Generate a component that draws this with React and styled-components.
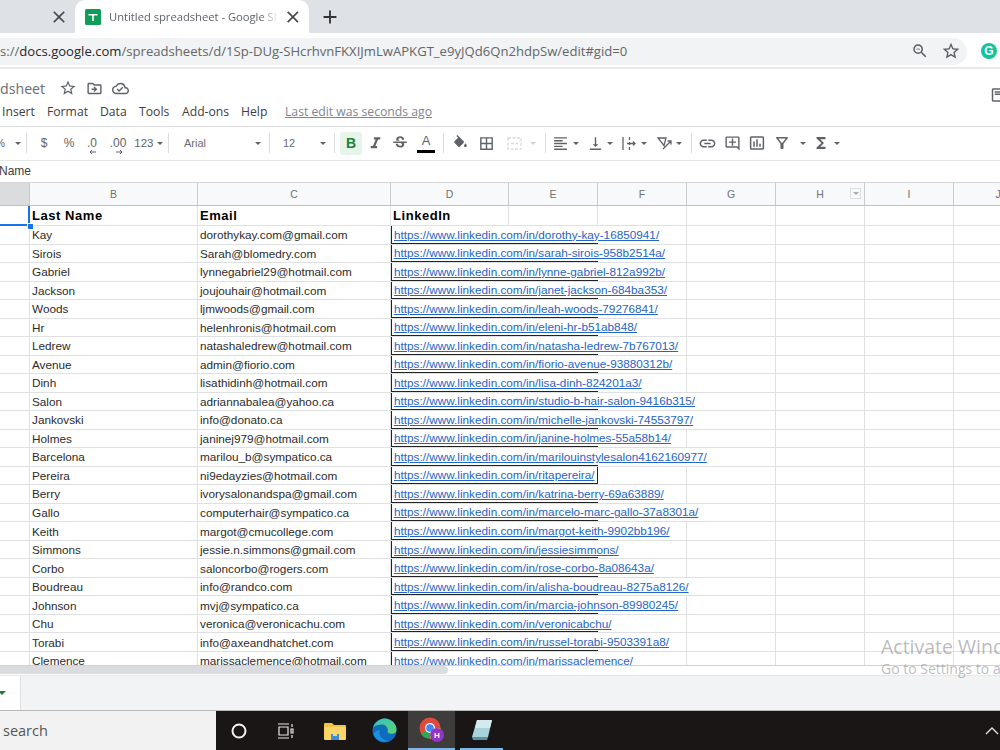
import React from 'react';
import styled, { createGlobalStyle } from 'styled-components';
import {
  MdClose, MdAdd, MdZoomOut, MdStarBorder, MdOutlineDriveFileMove, MdOutlineCloudDone,
  MdFormatItalic, MdStrikethroughS, MdBorderAll,
  MdFormatAlignLeft, MdVerticalAlignBottom, MdLink, MdOutlineAddComment, MdInsertChartOutlined,
  MdOutlineFilterAlt, MdFunctions, MdOutlineFeaturedPlayList,
} from 'react-icons/md';

const GlobalStyle = createGlobalStyle`
  html, body {
    margin: 0;
    padding: 0;
    overflow: hidden;
    background: #fff;
    font-family: "Liberation Sans", Arial, sans-serif;
  }
`;

const Page = styled.div`
  position: relative;
  width: 1000px;
  height: 750px;
  overflow: hidden;
  display: flex;
  flex-direction: column;
`;

/* browser chrome */
const TabStrip = styled.div`
  height: 33px;
  flex: none;
  background: #dee1e6;
  display: flex;
  align-items: flex-end;
  color: #45484c;
`;

const Tab = styled.div`
  width: ${props => props.$w}px;
  margin-left: ${props => props.$ml || 0}px;
  height: 33px;
  box-sizing: border-box;
  display: flex;
  align-items: center;
  background: ${props => props.$active ? '#fff' : 'transparent'};
  border-radius: 10px 10px 0 0;
  padding: ${props => props.$active ? '0 6px 0 10px' : '0 4px 0 0'};
  justify-content: ${props => props.$active ? 'flex-start' : 'flex-end'};
  font-size: 20px;
`;

const SheetIcon = styled.svg`
  width: 16px;
  height: 16px;
  flex: none;
`;

const TabTitle = styled.span`
  font-family: "Open Sans", sans-serif;
  font-size: 11.2px;
  color: #5f6368;
  white-space: nowrap;
  overflow: hidden;
  width: 172px;
  margin: 0 5px 0 8px;
  -webkit-mask-image: linear-gradient(to right, #000 90%, transparent);
  mask-image: linear-gradient(to right, #000 90%, transparent);
`;

const NewTab = styled.div`
  margin-left: 10px;
  height: 33px;
  display: flex;
  align-items: center;
  font-size: 20px;
  color: #333;
`;

const AddressRow = styled.div`
  height: 36px;
  flex: none;
  box-sizing: border-box;
  border-bottom: 2px solid #e8e9eb;
  padding-top: 2px;
  display: flex;
  align-items: center;
  background: #fff;
`;

const AddressPill = styled.div`
  width: 967px;
  height: 27px;
  box-sizing: border-box;
  background: #f1f3f4;
  border-radius: 0 14px 14px 0;
  display: flex;
  align-items: center;
  justify-content: space-between;
  padding-right: 6px;
  color: #5a5d61;
  font-size: 20px;
`;

const Url = styled.div`
  font-family: "Open Sans", sans-serif;
  font-size: 13.1px;
  color: #63666a;
  white-space: nowrap;
  b {
    font-weight: 400;
    color: #26282b;
  }
`;

const PillIcons = styled.div`
  display: flex;
  gap: 12px;
  align-items: center;
`;

const GrammarlyBadge = styled.div`
  width: 16px;
  height: 16px;
  margin-left: 14px;
  flex: none;
  border-radius: 50%;
  background: #15c39a;
  color: #fff;
  font-size: 12px;
  font-weight: 700;
  display: flex;
  align-items: center;
  justify-content: center;
`;

/* docs header */
const DocHeader = styled.div`
  height: 58px;
  flex: none;
  box-sizing: border-box;
  border-bottom: 1px solid #dadce0;
  display: flex;
  justify-content: space-between;
  background: #fff;
`;

const TitleBlock = styled.div`
  display: flex;
  flex-direction: column;
`;

const TitleRow = styled.div`
  height: 33px;
  display: flex;
  align-items: center;
  color: #5f6368;
  font-size: 17px;
  padding-top: 5px;
  box-sizing: border-box;
`;

const DocTitle = styled.span`
  font-family: "Open Sans", sans-serif;
  font-size: 14.2px;
  width: 59px;
  color: #6b6e72;
`;

const TitleIcons = styled.div`
  display: flex;
  gap: 9px;
  align-items: center;
`;

const MenuRow = styled.div`
  display: flex;
  align-items: center;
  height: 18px;
  padding-left: 2px;
  font-family: "Open Sans", sans-serif;
  font-size: 12.2px;
  color: #3c4043;
`;

const MenuItem = styled.span`
  width: ${props => props.$w}px;
`;

const LastEdit = styled.span`
  color: #80868b;
  text-decoration: underline;
`;

const SideIcon = styled.div`
  padding-top: 17px;
  margin-right: -9px;
  color: #5f6368;
  font-size: 18px;
`;

/* toolbar */
const Toolbar = styled.div`
  height: 34px;
  flex: none;
  box-sizing: border-box;
  border-bottom: 1px solid #e3e4e6;
  padding-bottom: 1px;
  display: flex;
  align-items: center;
  color: #5f6368;
  font-size: 12px;
`;

const Tool = styled.div`
  position: relative;
  width: ${props => props.$w || 20}px;
  margin-left: ${props => props.$ml || 0}px;
  height: 23px;
  flex: none;
  display: flex;
  align-items: center;
  justify-content: center;
  font-size: ${props => props.$size || 17}px;
  color: ${props => props.$muted ? '#d0d2d4' : 'inherit'};
  white-space: nowrap;
  border-radius: 3px;
`;

const BoldTool = styled(Tool)`
  background: #e6f4ea;
  color: #188038;
  font-size: 14px;
  font-weight: 700;
`;

const ColorTool = styled(Tool)`
  flex-direction: column;
  font-size: 13px;
  color: #5f6368;
  span {
    line-height: 15px;
  }
  i {
    display: block;
    width: 18px;
    height: 3px;
    background: #000;
    margin-top: 2px;
  }
`;

const ZoomStub = styled.div`
  width: 27px;
  flex: none;
  display: flex;
  align-items: center;
  justify-content: flex-end;
  overflow: hidden;
  font-size: 11px;
  span {
    margin-right: 10px;
  }
`;

const Caret = styled.i`
  width: 0;
  height: 0;
  flex: none;
  border-left: 3.5px solid transparent;
  border-right: 3.5px solid transparent;
  border-top: 3.5px solid ${props => props.$muted ? '#d0d2d4' : '#5f6368'};
`;

const CaretTool = styled.div`
  flex: none;
  width: 8px;
  margin-left: ${props => props.$ml || 0}px;
  display: flex;
  justify-content: center;
`;

const ToolSep = styled.div`
  width: 1px;
  height: 20px;
  flex: none;
  margin-left: ${props => props.$ml || 0}px;
  background: #dadce0;
`;

const SelectTool = styled.div`
  width: ${props => props.$w}px;
  flex: none;
  box-sizing: border-box;
  display: flex;
  align-items: center;
  justify-content: space-between;
  padding: 0 8px 0 ${props => props.$pl}px;
  font-size: 11px;
  color: #6a6e72;
`;

const DecimalArrow = styled.svg`
  position: absolute;
  left: ${props => props.$left}px;
  bottom: 0;
  width: 8px;
  height: 6px;
`;

const FormulaBar = styled.div`
  height: 22px;
  flex: none;
  box-sizing: border-box;
  border-bottom: 1px solid #d4d5d6;
  padding-bottom: 1px;
  display: flex;
  align-items: center;
  font-size: 12px;
  color: #3c4043;
  overflow: hidden;
  span {
    margin-left: -1px;
  }
`;

/* grid */
const COLUMNS = '30px 168px 193px 118px 89px 89px 89px 89px 89px 89px';

const ColumnHeaders = styled.div`
  height: 23px;
  width: 1043px;
  flex: none;
  box-sizing: border-box;
  display: grid;
  grid-template-columns: ${COLUMNS};
  border-bottom: 1px solid #c0c1c2;
`;

const ColumnHeader = styled.div`
  position: relative;
  box-sizing: border-box;
  background: ${props => props.$selected ? '#dbdcdd' : '#f8f9fa'};
  border-right: 1px solid #c9cacb;
  display: flex;
  align-items: center;
  justify-content: center;
  font-size: 10.5px;
  color: #6e7174;
`;

const HeaderFilter = styled.div`
  position: absolute;
  right: 3px;
  top: 5px;
  width: 11px;
  height: 11px;
  box-sizing: border-box;
  border: 1px solid #dfe0e1;
  display: flex;
  align-items: center;
  justify-content: center;
  &::after {
    content: '';
    border-left: 3px solid transparent;
    border-right: 3px solid transparent;
    border-top: 3px solid #a9abad;
  }
`;

const Sheet = styled.div`
  position: relative;
  height: 460px;
  flex: none;
  overflow: hidden;
  background: #fff;
  border-bottom: 1px solid #d0d1d2;
  box-sizing: border-box;
`;

const Row = styled.div`
  display: grid;
  width: 1043px;
  grid-template-columns: ${COLUMNS};
  height: ${props => props.$h}px;
`;

const Cell = styled.div`
  box-sizing: border-box;
  border-right: 1px solid #dfe0e1;
  border-bottom: 1px solid #dfe0e1;
  padding-left: 2px;
  display: flex;
  align-items: center;
  font-size: 11.75px;
  color: #2b2b2b;
  white-space: nowrap;
  min-width: 0;
`;

const HeadCell = styled(Cell)`
  font-size: 13px;
  font-weight: 700;
  letter-spacing: 0.55px;
  color: #000;
`;

const LinkCell = styled.div`
  grid-column: span ${props => props.$span};
  box-sizing: border-box;
  border-right: 1px solid #dfe0e1;
  border-bottom: 1px solid #dfe0e1;
  min-width: 0;
`;

const LinkBox = styled.div`
  width: 207px;
  height: 100%;
  box-sizing: border-box;
  border-left: 1px solid #222;
  border-bottom: 1px solid #222;
  border-right: ${props => props.$boxed ? '1px solid #222' : 'none'};
  padding-left: 2px;
  display: flex;
  align-items: center;
  white-space: nowrap;
  font-size: 11.75px;
  color: #2664c6;
  a {
    color: inherit;
    text-decoration: underline;
  }
`;

const SelectedCell = styled(Cell)`
  border-right: 2px solid #1a73e8;
  border-bottom: 2px solid #1a73e8;
`;

const Handle = styled.div`
  position: absolute;
  left: 27px;
  top: 17px;
  width: 5px;
  height: 5px;
  background: #1a73e8;
  border: 1px solid #fff;
`;

const ScrollRow = styled.div`
  height: 10px;
  flex: none;
  box-sizing: border-box;
  background: #fff;
  border-bottom: 1px solid #e6e7e8;
`;

const ScrollThumb = styled.div`
  width: 448px;
  height: 8px;
  background: #dadce0;
  border-radius: 0 4px 4px 0;
`;

const SheetBar = styled.div`
  height: 35px;
  flex: none;
  background: #f1f3f4;
  display: flex;
  border-bottom: 1px solid #b9b9b9;
  box-sizing: border-box;
`;

const SheetTabStub = styled.div`
  width: 20px;
  background: #fff;
  border-right: 1px solid #dfe0e1;
  display: flex;
  align-items: center;
  &::before {
    content: '';
    margin-left: -2px;
    border-left: 4px solid transparent;
    border-right: 4px solid transparent;
    border-top: 4px solid #188038;
  }
`;

/* windows taskbar */
const Taskbar = styled.div`
  flex: 1;
  display: flex;
  background: #1a1615;
`;

const SearchBox = styled.div`
  width: 216px;
  flex: none;
  background: #f2f2f2;
  display: flex;
  align-items: center;
  padding-left: 3px;
  box-sizing: border-box;
  font-family: "Open Sans", sans-serif;
  font-size: 14.5px;
  color: #555;
`;

const TaskItem = styled.div`
  width: ${props => props.$w}px;
  margin-left: ${props => props.$ml || 0}px;
  flex: none;
  box-sizing: border-box;
  display: flex;
  align-items: center;
  justify-content: center;
  background: ${props => props.$active ? '#3f3d3c' : 'transparent'};
  border-bottom: ${props => props.$open ? '2px solid #76b9ed' : 'none'};
`;

const Tray = styled.div`
  margin-left: auto;
  display: flex;
  align-items: center;
  padding-right: 1px;
`;

const Watermark = styled.div`
  position: absolute;
  left: 881px;
  top: 635px;
  font-family: "Open Sans", sans-serif;
  color: rgba(90, 90, 90, 0.42);
  white-space: nowrap;
  pointer-events: none;
`;

const WatermarkTitle = styled.div`
  font-size: 19.5px;
  line-height: 24px;
`;

const WatermarkNote = styled.div`
  font-size: 14px;
  line-height: 20px;
`;

const people = [
  ['Kay', 'dorothykay.com@gmail.com', 'dorothy-kay-16850941/'],
  ['Sirois', 'Sarah@blomedry.com', 'sarah-sirois-958b2514a/'],
  ['Gabriel', 'lynnegabriel29@hotmail.com', 'lynne-gabriel-812a992b/'],
  ['Jackson', 'joujouhair@hotmail.com', 'janet-jackson-684ba353/'],
  ['Woods', 'ljmwoods@gmail.com', 'leah-woods-79276841/'],
  ['Hr', 'helenhronis@hotmail.com', 'eleni-hr-b51ab848/'],
  ['Ledrew', 'natashaledrew@hotmail.com', 'natasha-ledrew-7b767013/'],
  ['Avenue', 'admin@fiorio.com', 'fiorio-avenue-93880312b/'],
  ['Dinh', 'lisathidinh@hotmail.com', 'lisa-dinh-824201a3/'],
  ['Salon', 'adriannabalea@yahoo.ca', 'studio-b-hair-salon-9416b315/'],
  ['Jankovski', 'info@donato.ca', 'michelle-jankovski-74553797/'],
  ['Holmes', 'janinej979@hotmail.com', 'janine-holmes-55a58b14/'],
  ['Barcelona', 'marilou_b@sympatico.ca', 'marilouinstylesalon4162160977/'],
  ['Pereira', 'ni9edayzies@hotmail.com', 'ritapereira/'],
  ['Berry', 'ivorysalonandspa@gmail.com', 'katrina-berry-69a63889/'],
  ['Gallo', 'computerhair@sympatico.ca', 'marcelo-marc-gallo-37a8301a/'],
  ['Keith', 'margot@cmucollege.com', 'margot-keith-9902bb196/'],
  ['Simmons', 'jessie.n.simmons@gmail.com', 'jessiesimmons/'],
  ['Corbo', 'saloncorbo@rogers.com', 'rose-corbo-8a08643a/'],
  ['Boudreau', 'info@randco.com', 'alisha-boudreau-8275a8126/'],
  ['Johnson', 'mvj@sympatico.ca', 'marcia-johnson-89980245/'],
  ['Chu', 'veronica@veronicachu.com', 'veronicabchu/'],
  ['Torabi', 'info@axeandhatchet.com', 'russel-torabi-9503391a8/'],
  ['Clemence', 'marissaclemence@hotmail.com', 'marissaclemence/'],
];

const LETTERS = ['B', 'C', 'D', 'E', 'F', 'G', 'H', 'I', 'J'];
const PREFIX = 'https://www.linkedin.com/in/';

function ToolCaret({ ml, muted }) {
  return <CaretTool $ml={ml}><Caret $muted={muted} /></CaretTool>;
}

function App() {
  return (
    <Page>
      <GlobalStyle />
      <TabStrip>
        <Tab $w={73}><MdClose /></Tab>
        <Tab $w={234} $ml={2} $active>
          <SheetIcon viewBox="0 0 16 16">
            <rect width="16" height="16" rx="1.5" fill="#0f9d58" />
            <path d="M3.5 5h9v1.6H8.8V12H7.2V6.6H3.5z" fill="#fff" />
          </SheetIcon>
          <TabTitle>Untitled spreadsheet - Google Sheets</TabTitle>
          <MdClose />
        </Tab>
        <NewTab><MdAdd size={22} /></NewTab>
      </TabStrip>

      <AddressRow>
        <AddressPill>
          <Url>s://<b>docs.google.com</b>/spreadsheets/d/1Sp-DUg-SHcrhvnFKXIJmLwAPKGT_e9yJQd6Qn2hdpSw/edit#gid=0</Url>
          <PillIcons>
            <MdZoomOut size={18} />
            <MdStarBorder size={20} />
          </PillIcons>
        </AddressPill>
        <GrammarlyBadge>G</GrammarlyBadge>
      </AddressRow>

      <DocHeader>
        <TitleBlock>
          <TitleRow>
            <DocTitle>dsheet</DocTitle>
            <TitleIcons>
              <MdStarBorder size={18} />
              <MdOutlineDriveFileMove size={17} />
              <MdOutlineCloudDone size={17} />
            </TitleIcons>
          </TitleRow>
          <MenuRow>
            <MenuItem $w={45}>Insert</MenuItem>
            <MenuItem $w={53}>Format</MenuItem>
            <MenuItem $w={39}>Data</MenuItem>
            <MenuItem $w={43}>Tools</MenuItem>
            <MenuItem $w={59}>Add-ons</MenuItem>
            <MenuItem $w={44}>Help</MenuItem>
            <LastEdit>Last edit was seconds ago</LastEdit>
          </MenuRow>
        </TitleBlock>
        <SideIcon><MdOutlineFeaturedPlayList /></SideIcon>
      </DocHeader>

      <Toolbar>
        <ZoomStub>
          <span>%</span>
          <Caret />
          <ToolSep $ml={5} />
        </ZoomStub>
        <Tool $ml={7} $size={12}>$</Tool>
        <Tool $ml={5} $size={12}>%</Tool>
        <Tool $ml={3} $size={12}>
          .0
          <DecimalArrow $left={6} viewBox="0 0 8 6"><path d="M8 3H2M4 1 2 3l2 2" stroke="#5f6368" fill="none" /></DecimalArrow>
        </Tool>
        <Tool $ml={4} $w={24} $size={12}>
          .00
          <DecimalArrow $left={10} viewBox="0 0 8 6"><path d="M0 3h6M4 1l2 2-2 2" stroke="#5f6368" fill="none" /></DecimalArrow>
        </Tool>
        <Tool $ml={3} $w={31} $size={11.5}>
          123&nbsp;<Caret />
        </Tool>
        <ToolSep $ml={4} />
        <SelectTool $w={100} $pl={15}>Arial<Caret /></SelectTool>
        <ToolSep />
        <SelectTool $w={64} $pl={13}>12<Caret /></SelectTool>
        <ToolSep />
        <BoldTool $ml={5} $w={22}>B</BoldTool>
        <Tool $ml={2} $w={22} $size={19}><MdFormatItalic /></Tool>
        <Tool $ml={3} $w={22} $size={18}><MdStrikethroughS /></Tool>
        <ColorTool $ml={4} $w={22}><span>A</span><i /></ColorTool>
        <ToolSep $ml={6} />
        <Tool $ml={6}>
          <svg width="17" height="17" viewBox="0 0 24 24" fill="#5f6368">
            <path d="M16.56 8.94 7.62 0 6.21 1.41l2.38 2.38-5.15 5.15c-.59.59-.59 1.54 0 2.12l5.5 5.5c.29.29.68.44 1.06.44s.77-.15 1.06-.44l5.5-5.5c.59-.58.59-1.53 0-2.12zM19 11.5s-2 2.17-2 3.5c0 1.1.9 2 2 2s2-.9 2-2c0-1.33-2-3.5-2-3.5z" />
          </svg>
        </Tool>
        <Tool $ml={6}><MdBorderAll /></Tool>
        <Tool $ml={8} $muted>
          <svg width="15" height="13" viewBox="0 0 15 13" fill="none" stroke="#d8dadc" strokeWidth="1.3" strokeDasharray="3 1.5">
            <rect x="1" y="1" width="13" height="11" />
            <path d="M4 6.500h7" />
          </svg>
        </Tool>
        <ToolCaret ml={5} muted />
        <ToolSep $ml={8} />
        <Tool $ml={4}><MdFormatAlignLeft /></Tool>
        <ToolCaret ml={2} />
        <Tool $ml={5}><MdVerticalAlignBottom /></Tool>
        <ToolCaret ml={1} />
        <Tool $ml={5}>
          <svg width="15" height="15" viewBox="0 0 15 15" fill="none" stroke="#5f6368" strokeWidth="1.3">
            <path d="M1 1v13M7.500 1v3M7.500 6v3M7.500 11v3M5 7.500h8M11 5.500l2 2-2 2" />
          </svg>
        </Tool>
        <ToolCaret ml={1} />
        <Tool $ml={6}>
          <svg width="15" height="13" viewBox="0 0 15 13" fill="none" stroke="#5f6368" strokeWidth="1.3">
            <path d="M1 1h8L7 8.500zM14 4 6 12M10.500 4H14v3.500" />
          </svg>
        </Tool>
        <ToolCaret ml={1} />
        <ToolSep $ml={8} />
        <Tool $ml={5} $size={19}><MdLink /></Tool>
        <Tool $ml={5}><MdOutlineAddComment /></Tool>
        <Tool $ml={5} $size={18}><MdInsertChartOutlined /></Tool>
        <Tool $ml={5} $size={18}><MdOutlineFilterAlt /></Tool>
        <ToolCaret ml={7} />
        <Tool $ml={4} $size={18}><MdFunctions /></Tool>
        <ToolCaret ml={2} />
      </Toolbar>

      <FormulaBar><span>Name</span></FormulaBar>

      <ColumnHeaders>
        <ColumnHeader $selected />
        {LETTERS.map(letter => (
          <ColumnHeader key={letter}>
            {letter}
            {letter === 'H' && <HeaderFilter />}
          </ColumnHeader>
        ))}
      </ColumnHeaders>

      <Sheet>
        <Row $h={20}>
          <SelectedCell />
          <HeadCell>Last Name</HeadCell>
          <HeadCell>Email</HeadCell>
          <HeadCell>LinkedIn</HeadCell>
          {['e', 'f', 'g', 'h', 'i', 'j'].map(k => <Cell key={k} />)}
        </Row>
        {people.map(([last, email, slug]) => {
          const url = PREFIX + slug;
          const wide = url.length >= 54;
          return (
            <Row $h={18.52} key={slug}>
              <Cell />
              <Cell>{last}</Cell>
              <Cell>{email}</Cell>
              <LinkCell $span={wide ? 4 : 3}>
                <LinkBox $boxed={slug === 'ritapereira/'}><a>{url}</a></LinkBox>
              </LinkCell>
              {!wide && <Cell />}
              <Cell />
              <Cell />
              <Cell />
            </Row>
          );
        })}
        <Handle />
      </Sheet>

      <ScrollRow><ScrollThumb /></ScrollRow>

      <SheetBar><SheetTabStub /></SheetBar>

      <Taskbar>
        <SearchBox>search</SearchBox>
        <TaskItem $w={46}>
          <svg width="16" height="16" viewBox="0 0 16 16" fill="none" stroke="#f2f2f2" strokeWidth="2">
            <circle cx="8" cy="8" r="6.500" />
          </svg>
        </TaskItem>
        <TaskItem $w={47}>
          <svg width="18" height="16" viewBox="0 0 18 16" fill="none" stroke="#e8e8e8" strokeWidth="1.2">
            <path d="M1 1h11M1 15h11M2 4h9v8H2zM15 1v3M15 12v3M14 6h2v4h-2z" />
          </svg>
        </TaskItem>
        <TaskItem $w={52}>
          <svg width="22" height="18" viewBox="0 0 22 18">
            <path d="M0 2a1 1 0 0 1 1-1h7l2 2h11a1 1 0 0 1 1 1v2H0z" fill="#f2c249" />
            <path d="M0 5h22v12a1 1 0 0 1-1 1H1a1 1 0 0 1-1-1z" fill="#fbd568" />
            <path d="M7 12h8v6H7z" fill="#3c8fd0" />
            <path d="M9 12h4v2H9z" fill="#fbd568" />
          </svg>
        </TaskItem>
        <TaskItem $w={47}>
          <svg width="25" height="25" viewBox="0 0 25 25">
            <defs>
              <linearGradient id="edgeA" x1="0" y1="0" x2="1" y2="1">
                <stop offset="0" stopColor="#35c1c4" />
                <stop offset="1" stopColor="#5fd36b" />
              </linearGradient>
            </defs>
            <circle cx="12.500" cy="12.500" r="12" fill="#0f6cbd" />
            <path d="M1 10C3 3 9 .5 13 .5c6 0 11.500 5 11.500 11 0 4-4 5-7 4-2-.7-2.500-2.500-1.500-4C15 8 12 6 9 6.500 5 7 2 8 1 10z" fill="url(#edgeA)" />
            <path d="M8 12c-2 5 2 10 8 11-3 1.500-12 1-14.500-7C3 13 6 12 8 12z" fill="#1b8fe0" />
          </svg>
        </TaskItem>
        <TaskItem $w={47} $active $open>
          <svg width="28" height="28" viewBox="0 0 28 28">
            <circle cx="12" cy="12" r="10.500" fill="#dd4b3e" />
            <path d="M12 12 3 18A10.500 10.500 0 0 0 12 22.500z" fill="#2da94f" />
            <path d="M12 12h10.500A10.500 10.500 0 0 1 12 22.500z" fill="#f6c026" />
            <circle cx="12" cy="12" r="5" fill="#fff" />
            <circle cx="12" cy="12" r="3.800" fill="#4285f4" />
            <circle cx="19" cy="19" r="7" fill="#9334c7" />
            <text x="19" y="22" textAnchor="middle" fontSize="8" fontWeight="700" fill="#fff" fontFamily="Liberation Sans">H</text>
          </svg>
        </TaskItem>
        <TaskItem $w={43} $ml={5} $open>
          <svg width="24" height="24" viewBox="0 0 24 24">
            <path d="M7 2h15l-4 17H2z" fill="#a9d3dc" />
            <path d="M7 2h15l-2 8H5z" fill="#d4eaee" />
            <path d="M2 19h16l-1 3H3z" fill="#5d8fa8" />
          </svg>
        </TaskItem>
        <Tray>
          <svg width="14" height="8" viewBox="0 0 14 8" fill="none" stroke="#e6e6e6" strokeWidth="1.300">
            <path d="M1 7 7 1l6 6" />
          </svg>
        </Tray>
      </Taskbar>

      <Watermark>
        <WatermarkTitle>Activate Windows</WatermarkTitle>
        <WatermarkNote>Go to Settings to activate Windows.</WatermarkNote>
      </Watermark>
    </Page>
  );
}

export default App;
